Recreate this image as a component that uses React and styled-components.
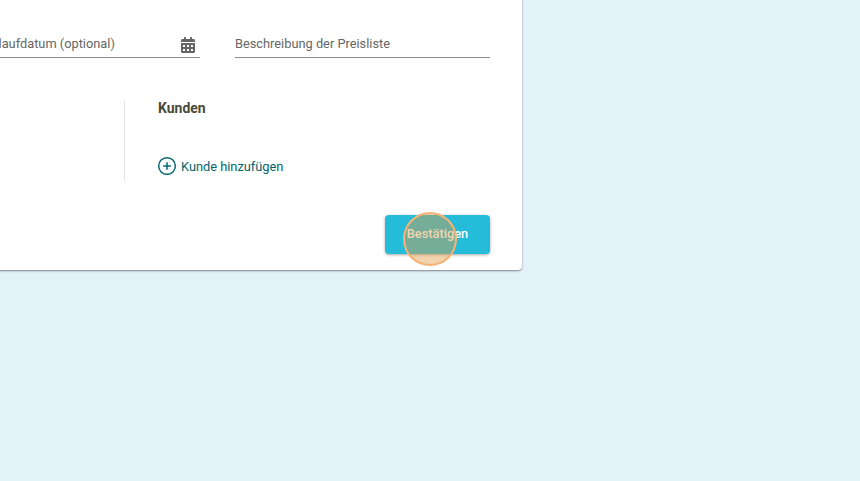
import styled, { createGlobalStyle } from 'styled-components'
import { FaCalendarAlt } from 'react-icons/fa'
import { CirclePlus } from 'lucide-react'

const GlobalStyle = createGlobalStyle`
  html, body {
    margin: 0;
    height: 100%;
    overflow: hidden;
    background: #e3f1f9;
    font-family: Roboto, "Liberation Sans", sans-serif;
  }
`

const Page = styled.div`
  width: 860px;
  height: 481px;
  overflow: hidden;
`

const Card = styled.div`
  box-sizing: border-box;
  width: 562px;
  margin: -10px 0 0 -40px;
  padding: 40px 32px 16px 0;
  background: #fff;
  border-radius: 4px;
  box-shadow: 0 1px 2px rgba(0, 0, 0, 0.45);
`

const FieldRow = styled.div`
  display: flex;
  justify-content: flex-end;
  gap: 35px;
`

const Field = styled.div`
  box-sizing: border-box;
  display: flex;
  align-items: center;
  justify-content: space-between;
  width: ${(p) => p.$width}px;
  height: 28px;
  padding-right: 4px;
  border-bottom: 1px solid #8e8e8e;
  color: #666;
  font-size: 12.8px;
`

const CalendarIcon = styled(FaCalendarAlt)`
  margin-top: 2px;
  color: #666;
`

const CustomerRow = styled.div`
  display: flex;
  justify-content: flex-end;
  margin-top: 42px;
`

const CustomerColumn = styled.div`
  box-sizing: border-box;
  display: flex;
  flex-direction: column;
  justify-content: space-between;
  width: 366px;
  height: 81px;
  padding: 0 0 5px 33px;
  border-left: 1px solid #e4e4e4;
`

const Heading = styled.div`
  color: #4a4a38;
  font-size: 14px;
  font-weight: 700;
  line-height: 16px;
`

const AddLink = styled.div`
  display: flex;
  align-items: center;
  gap: 4px;
  margin-left: -1px;
  color: #00656f;
  font-size: 12.8px;
`

const Actions = styled.div`
  display: flex;
  justify-content: flex-end;
  margin-top: 34px;
`

const ButtonWrap = styled.div`
  position: relative;
`

const ConfirmButton = styled.button`
  display: block;
  width: 105px;
  height: 39px;
  padding: 0 0 2px 0;
  border: 0;
  border-radius: 4px;
  background: #25bcd9;
  box-shadow: 0 1px 3px rgba(0, 0, 0, 0.35);
  color: #fff;
  font-family: inherit;
  font-size: 12.8px;
  font-weight: 500;
`

const ClickMarker = styled.span`
  position: absolute;
  left: 17.5px;
  top: -3px;
  box-sizing: border-box;
  width: 54.5px;
  height: 54px;
  border: 2px solid #f6b375;
  border-radius: 50%;
  background: rgba(222, 155, 70, 0.44);
`

export default function App() {
  return (
    <Page>
      <GlobalStyle />
      <Card>
        <FieldRow>
          <Field $width={217}>
            Ablaufdatum (optional)
            <CalendarIcon size={16} />
          </Field>
          <Field $width={255}>Beschreibung der Preisliste</Field>
        </FieldRow>
        <CustomerRow>
          <CustomerColumn>
            <Heading>Kunden</Heading>
            <AddLink>
              <CirclePlus size={20} strokeWidth={1.75} />
              Kunde hinzufügen
            </AddLink>
          </CustomerColumn>
        </CustomerRow>
        <Actions>
          <ButtonWrap>
            <ConfirmButton>Bestätigen</ConfirmButton>
            <ClickMarker />
          </ButtonWrap>
        </Actions>
      </Card>
    </Page>
  )
}
